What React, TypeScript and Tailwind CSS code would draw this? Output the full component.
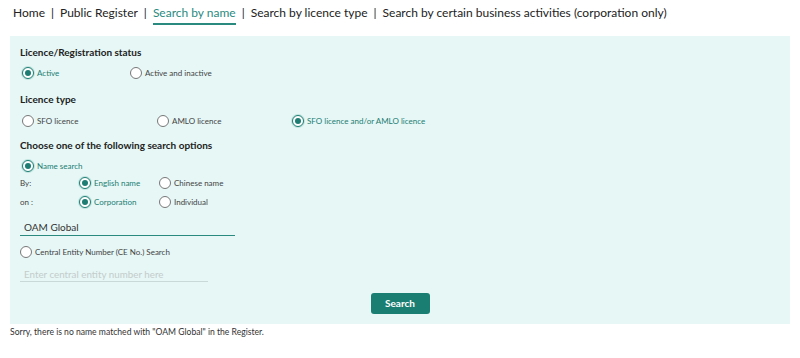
import React from 'react';

const font = { fontFamily: 'Lato, "Noto Sans", sans-serif' };

function Radio({ checked }: { checked?: boolean }) {
  return (
    <span
      className={`flex h-[12px] w-[12px] shrink-0 items-center justify-center rounded-full border bg-white ${
        checked ? 'border-[#1d7d72] ring-1 ring-[#bfe3de]' : 'border-[#777]'
      }`}
    >
      {checked && <span className="h-[6px] w-[6px] rounded-full bg-[#1d7d72]" />}
    </span>
  );
}

function Option({ label, checked, w }: { label: string; checked?: boolean; w?: string }) {
  return (
    <label className={`flex items-center gap-[3px] ${w ?? ''}`}>
      <Radio checked={checked} />
      <span className={`text-[8px] ${checked ? 'text-[#1d7d72]' : 'text-[#444]'}`}>{label}</span>
    </label>
  );
}

function Heading({ children, className }: { children: React.ReactNode; className?: string }) {
  return (
    <div className={`flex h-[16px] items-center text-[10px] font-bold text-[#222] ${className ?? ''}`}>
      {children}
    </div>
  );
}

export default function App() {
  const links = [
    'Public Register',
    'Search by name',
    'Search by licence type',
    'Search by certain business activities (corporation only)',
  ];

  return (
    <div className="h-[358px] w-[800px] bg-white" style={font}>
      <nav className="flex h-[36px] items-start pl-[13px] pt-[4px] text-[12px] text-[#222]">
        <span className="leading-[18px]">Home</span>
        {links.map((l) => (
          <React.Fragment key={l}>
            <span className="px-[6px] leading-[18px]">|</span>
            {l === 'Search by name' ? (
              <span className="border-b-2 border-[#2a8a80] pb-[1px] leading-[18px] text-[#2a8a80]">{l}</span>
            ) : (
              <span className="leading-[18px]">{l}</span>
            )}
          </React.Fragment>
        ))}
      </nav>

      <form className="mx-[10px] bg-[#e6f7f6] px-[10px] pb-[10px] pt-[8px]" onSubmit={(e) => e.preventDefault()}>
        <Heading>Licence/Registration status</Heading>
        <div className="mt-[4px] flex h-[18px] items-center pl-[2px]">
          <Option label="Active" checked w="w-[108px]" />
          <Option label="Active and inactive" />
        </div>

        <Heading className="mt-[9px]">Licence type</Heading>
        <div className="mt-[5px] flex h-[18px] items-center pl-[2px]">
          <Option label="SFO licence" w="w-[135px]" />
          <Option label="AMLO licence" w="w-[135px]" />
          <Option label="SFO licence and/or AMLO licence" checked />
        </div>

        <Heading className="mt-[7px]">Choose one of the following search options</Heading>
        <div className="mt-[5px] flex h-[16px] items-center pl-[2px]">
          <Option label="Name search" checked />
        </div>
        <div className="mt-[1px] flex h-[16px] items-center">
          <span className="w-[59px] text-[8px] text-[#444]">By:</span>
          <Option label="English name" checked w="w-[80px]" />
          <Option label="Chinese name" />
        </div>
        <div className="mt-[3px] flex h-[16px] items-center">
          <span className="w-[59px] text-[8px] text-[#444]">on :</span>
          <Option label="Corporation" checked w="w-[80px]" />
          <Option label="Individual" />
        </div>

        <input
          defaultValue="OAM Global"
          className="mt-[9px] block h-[17px] w-[215px] border-b border-[#2a8a80] bg-transparent px-[4px] text-[10px] text-[#333] outline-none"
        />

        <div className="mt-[8px] flex h-[16px] items-center">
          <Option label="Central Entity Number (CE No.) Search" />
        </div>

        <input
          placeholder="Enter central entity number here"
          className="mt-[7px] block h-[15px] w-[188px] border-b border-[#c9d9d7] bg-transparent px-[4px] text-[9.8px] text-[#333] outline-none placeholder:text-[#c4cccb]"
        />

        <div className="mt-[11px] flex justify-center">
          <button className="h-[21px] w-[59px] rounded-[3px] bg-[#1b7e72] text-[10px] font-bold text-white">
            Search
          </button>
        </div>
      </form>

      <p className="ml-[10px] mt-[2px] text-[8.6px] leading-[12px] text-[#333]">
        Sorry, there is no name matched with "OAM Global" in the Register.
      </p>
    </div>
  );
}
